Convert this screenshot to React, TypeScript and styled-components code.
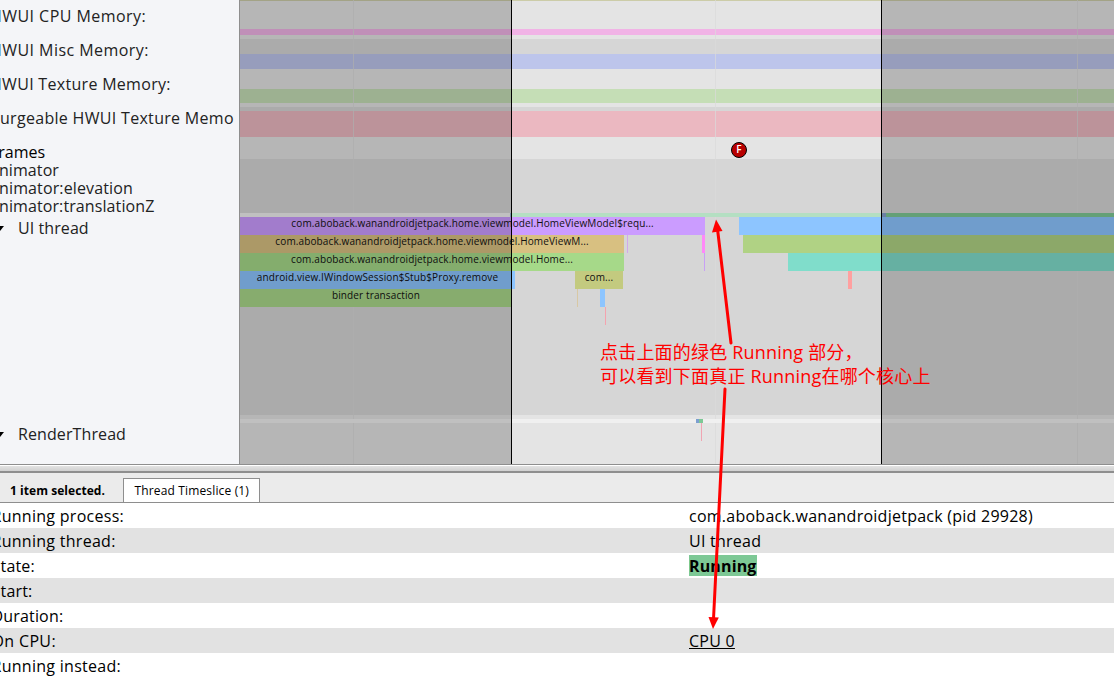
import React from "react";
import styled, { createGlobalStyle } from "styled-components";

const Global = createGlobalStyle`
  * { box-sizing: border-box; }
  body {
    margin: 0;
    overflow: hidden;
    background: #fff;
    color: #000;
    font-family: "Open Sans", "Noto Sans CJK SC", sans-serif;
  }
`;

const Page = styled.div`
  position: relative;
  display: flex;
  flex-direction: column;
  width: 1114px;
  height: 699px;
  overflow: hidden;
`;

const TrackArea = styled.div`
  display: flex;
  flex: none;
  height: 464px;
  overflow: hidden;
`;

const Headings = styled.div`
  display: flex;
  flex-direction: column;
  flex: none;
  width: 240px;
  padding-top: 7px;
  overflow: hidden;
  background: #f4f5f8;
  border-right: 1px solid #8e8e8e;
`;

const Heading = styled.div<{ $h: number; $shift?: number; $track?: number; $dark?: boolean }>`
  display: flex;
  flex: none;
  height: ${(p) => p.$h}px;
  margin-left: ${(p) => p.$shift ?? -10}px;
  font-size: 16px;
  line-height: 18px;
  letter-spacing: ${(p) => p.$track ?? 0}px;
  white-space: nowrap;
  color: ${(p) => (p.$dark ? "#000" : "#222")};
`;

const Arrow = styled.span`
  width: 0;
  height: 0;
  margin: 7px 14px 0 0;
  border: 4px solid transparent;
  border-top: 5px solid #000;
  border-bottom: 0;
`;

const Timeline = styled.div`
  position: relative;
  display: flex;
  flex-direction: column;
  flex: 1;
  overflow: hidden;
`;

const Track = styled.div<{ $h: number; $bg: string; $pad?: number }>`
  flex: none;
  height: ${(p) => p.$h}px;
  padding-top: ${(p) => p.$pad ?? 0}px;
  background: ${(p) => p.$bg};
`;

const Counter = styled.div<{ $h: number; $color: string }>`
  height: ${(p) => p.$h}px;
  background: ${(p) => p.$color};
`;

const SliceRow = styled.div<{ $h?: number; $bg?: string }>`
  position: relative;
  z-index: 1;
  display: flex;
  height: ${(p) => p.$h ?? 18}px;
  background: ${(p) => p.$bg ?? "transparent"};
`;

const Slice = styled.div<{ $gap?: number; $w: number; $color: string }>`
  flex: none;
  width: ${(p) => p.$w}px;
  margin-left: ${(p) => p.$gap ?? 0}px;
  background: ${(p) => p.$color};
  color: #111;
  font-size: 10px;
  line-height: 13px;
  letter-spacing: 0.12px;
  text-align: center;
  white-space: nowrap;
`;

const GridLine = styled.div<{ $x: number }>`
  position: absolute;
  top: 0;
  bottom: 0;
  left: ${(p) => p.$x}px;
  width: 1px;
  background: rgba(218, 218, 218, 0.7);
`;

const Dim = styled.div<{ $x: number; $w: number }>`
  position: absolute;
  z-index: 2;
  top: 0;
  bottom: 0;
  left: ${(p) => p.$x}px;
  width: ${(p) => p.$w}px;
  background: rgba(0, 0, 0, 0.2);
`;

const Edge = styled.div<{ $x: number }>`
  position: absolute;
  z-index: 3;
  top: 0;
  bottom: 0;
  left: ${(p) => p.$x}px;
  width: 1px;
  background: #000;
`;

const FrameMark = styled.div`
  position: absolute;
  z-index: 3;
  left: 491px;
  top: 142px;
  width: 16px;
  height: 16px;
  border: 1px solid #000;
  border-radius: 50%;
  background: #b80000;
  color: #fff;
  font-size: 10px;
  font-weight: 600;
  line-height: 12px;
  text-align: center;
`;

const Splitter = styled.div`
  flex: none;
  height: 9px;
  border-top: 1px solid #8e8e8e;
  border-bottom: 2px solid #8e8e8e;
  background: linear-gradient(#fff 0 1px, #e2e2e2 1px, #d0d0d0);
`;

const TabStrip = styled.div`
  display: flex;
  align-items: flex-end;
  flex: none;
  height: 30px;
  border-bottom: 1px solid #8e8e8e;
  background: #ebebeb;
  font-size: 12px;
  line-height: 24px;
  white-space: nowrap;
`;

const Selected = styled.div`
  width: 123px;
  height: 24px;
  padding-left: 10px;
  font-weight: 700;
  line-height: 26px;
  letter-spacing: 0.05px;
`;

const Tab = styled.div`
  width: 137px;
  height: 24px;
  padding-left: 10.5px;
  border: 1px solid #8e8e8e;
  border-bottom: 0;
  background: #fff;
  letter-spacing: 0.15px;
`;

const Row = styled.div<{ $odd: boolean }>`
  display: flex;
  flex: none;
  height: 25px;
  background: ${(p) => (p.$odd ? "#e2e2e2" : "#fff")};
  font-size: 16px;
  line-height: 26px;
  white-space: nowrap;
`;

const Name = styled.div<{ $track: number }>`
  width: 697.5px;
  margin-left: -8.5px;
  letter-spacing: ${(p) => p.$track}px;
`;

const Value = styled.div`
  letter-spacing: 0.25px;
`;

const Badge = styled.b`
  display: block;
  height: 21px;
  margin-top: 2px;
  background: #7dc895;
  line-height: 22px;
  letter-spacing: 0.14px;
`;

const Annotation = styled.div`
  position: absolute;
  z-index: 5;
  left: 600px;
  top: 340px;
  color: #f00;
  font-size: 18px;
  line-height: 24px;
  letter-spacing: 0.2px;
  white-space: nowrap;
`;

const Arrows = styled.svg`
  position: absolute;
  z-index: 4;
  left: 0;
  top: 0;
`;

const details: { name: string; track: number; value?: React.ReactNode }[] = [
  { name: "Running process:", track: 0.28, value: "com.aboback.wanandroidjetpack (pid 29928)" },
  { name: "Running thread:", track: 0.28, value: "UI thread" },
  { name: "State:", track: 0.2, value: <Badge>Running</Badge> },
  { name: "Start:", track: 0.2 },
  { name: "Duration:", track: 0.17 },
  { name: "On CPU:", track: 0.35, value: <u>CPU 0</u> },
  { name: "Running instead:", track: 0.28 },
];

const LIGHT = "#e4e4e4";
const DARK = "#d6d6d6";

export default function App() {
  return (
    <Page>
      <Global />
      <TrackArea>
        <Headings>
          <Heading $h={34} $track={0.45}>HWUI CPU Memory:</Heading>
          <Heading $h={34} $track={0.45}>HWUI Misc Memory:</Heading>
          <Heading $h={34} $track={0.3}>HWUI Texture Memory:</Heading>
          <Heading $h={34} $track={0.31}>Purgeable HWUI Texture Memo</Heading>
          <Heading $h={18} $dark>Frames</Heading>
          <Heading $h={18} $track={0.08}>animator</Heading>
          <Heading $h={18} $track={0.13}>animator:elevation</Heading>
          <Heading $h={22} $track={0.1}>animator:translationZ</Heading>
          <Heading $h={206} $shift={-4} $track={0.08}><Arrow />UI thread</Heading>
          <Heading $h={30} $shift={-4} $track={0.1}><Arrow />RenderThread</Heading>
        </Headings>
        <Timeline>
          <Track $h={1} $bg="#cccca8" />
          <Track $h={38} $pad={28} $bg={LIGHT}><Counter $h={6} $color="#f1b3e6" /></Track>
          <Track $h={30} $pad={15} $bg={DARK}><Counter $h={15} $color="#bdc5eb" /></Track>
          <Track $h={38} $pad={20} $bg={LIGHT}><Counter $h={14} $color="#c5deb6" /></Track>
          <Track $h={30} $pad={4} $bg={DARK}><Counter $h={26} $color="#ebb8c1" /></Track>
          <Track $h={22} $bg={LIGHT} />
          <Track $h={256} $pad={54} $bg={DARK}>
            <SliceRow $h={4} $bg="#f0f0f0">
              <Slice $gap={270} $w={1} $color="#9db8d8" />
              <Slice $w={371} $color="#b4dfc2" />
              <Slice $w={4} $color="#86a0cc" />
              <Slice $w={228} $color="#7dc895" />
            </SliceRow>
            <SliceRow>
              <Slice $w={465} $color="#cb9cff">com.aboback.wanandroidjetpack.home.viewmodel.HomeViewModel$requ...</Slice>
              <Slice $gap={34} $w={375} $color="#8dc5ff" />
            </SliceRow>
            <SliceRow>
              <Slice $w={384} $color="#d8c081">com.aboback.wanandroidjetpack.home.viewmodel.HomeViewM...</Slice>
              <Slice $gap={3} $w={1} $color="#d2a8ea" />
              <Slice $gap={74} $w={3} $color="#ff88f8" />
              <Slice $gap={38} $w={371} $color="#b0d284" />
            </SliceRow>
            <SliceRow>
              <Slice $w={384} $color="#a6d989">com.aboback.wanandroidjetpack.home.viewmodel.Home...</Slice>
              <Slice $gap={80} $w={1} $color="#c8a0f5" />
              <Slice $gap={83} $w={326} $color="#80ddcb" />
            </SliceRow>
            <SliceRow>
              <Slice $w={275} $color="#8dc5ff">android.view.IWindowSession$Stub$Proxy.remove</Slice>
              <Slice $gap={60} $w={48} $color="#c3ca7f">com...</Slice>
              <Slice $gap={225} $w={4} $color="#ffa0a0" />
            </SliceRow>
            <SliceRow>
              <Slice $w={272} $color="#a9d88a">binder transaction</Slice>
              <Slice $gap={65} $w={1} $color="#d8c8a4" />
              <Slice $gap={22} $w={5} $color="#8dc5ff" />
            </SliceRow>
            <SliceRow>
              <Slice $gap={365} $w={1} $color="#f4a3ae" />
            </SliceRow>
          </Track>
          <Track $h={49} $pad={4} $bg={LIGHT}>
            <SliceRow $h={4} $bg="#f0f0f0">
              <Slice $gap={456} $w={3} $color="#7d9fd0" />
              <Slice $w={4} $color="#7dc895" />
            </SliceRow>
            <SliceRow><Slice $gap={461} $w={1} $color="#f0a5b2" /></SliceRow>
          </Track>
          <GridLine $x={113} />
          <GridLine $x={475} />
          <GridLine $x={837} />
          <Dim $x={0} $w={271} />
          <Dim $x={642} $w={232} />
          <Edge $x={271} />
          <Edge $x={641} />
          <FrameMark>F</FrameMark>
        </Timeline>
      </TrackArea>
      <Splitter />
      <TabStrip>
        <Selected>1 item selected.</Selected>
        <Tab>Thread Timeslice (1)</Tab>
      </TabStrip>
      {details.map((d, i) => (
        <Row key={d.name} $odd={i % 2 === 1}>
          <Name $track={d.track}>{d.name}</Name>
          <Value>{d.value}</Value>
        </Row>
      ))}
      <Arrows width="1114" height="699" viewBox="0 0 1114 699" fill="#f00">
        <path d="M731 343 717.5 229" stroke="#f00" strokeWidth="3" strokeLinecap="round" />
        <path d="M716 219.500 722.500 231 712 232.500Z" />
        <path d="M725 389 713.500 619" stroke="#f00" strokeWidth="3" strokeLinecap="round" />
        <path d="M713 629 708.500 617 718.800 617.500Z" />
      </Arrows>
      <Annotation>
        点击上面的绿色 Running 部分，
        <br />
        可以看到下面真正 Running在哪个核心上
      </Annotation>
    </Page>
  );
}
